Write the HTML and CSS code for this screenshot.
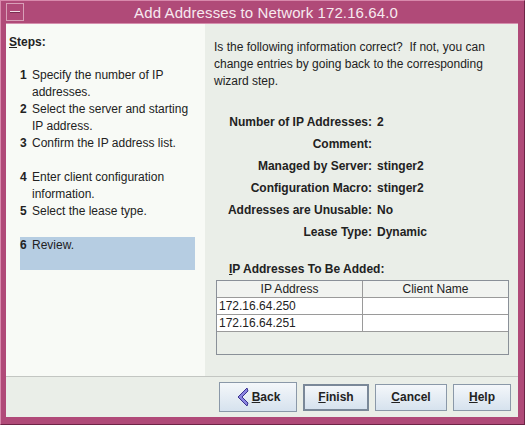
FILE: index.html
```html
<!DOCTYPE html>
<html>
<head>
<meta charset="utf-8">
<link rel="stylesheet" href="styles.css">
</head>
<body>
<div class="window">
  <div class="titlebar">
    <span class="menu-btn"><span class="dash"></span></span>
    <span class="title">Add Addresses to Network 172.16.64.0</span>
  </div>
  <div class="client">
    <div class="main">
      <div class="steps">
        <div class="steps-head"><u>S</u>teps:</div>
        <ol class="step-list">
          <li class="step"><b>1</b><span>Specify the number of IP addresses.</span></li>
          <li class="step"><b>2</b><span>Select the server and starting IP address.</span></li>
          <li class="step gap-after"><b>3</b><span>Confirm the IP address list.</span></li>
          <li class="step"><b>4</b><span>Enter client configuration information.</span></li>
          <li class="step gap-after"><b>5</b><span>Select the lease type.</span></li>
          <li class="step current"><b>6</b><span>Review.</span></li>
        </ol>
      </div>
      <div class="content">
        <p class="intro">Is the following information correct?&nbsp; If not, you can change entries by going back to the corresponding wizard step.</p>
        <div class="summary">
          <div class="lbl">Number of IP Addresses:</div><div class="val">2</div>
          <div class="lbl">Comment:</div><div class="val"></div>
          <div class="lbl">Managed by Server:</div><div class="val">stinger2</div>
          <div class="lbl">Configuration Macro:</div><div class="val">stinger2</div>
          <div class="lbl">Addresses are Unusable:</div><div class="val">No</div>
          <div class="lbl">Lease Type:</div><div class="val">Dynamic</div>
        </div>
        <div class="table-title"><u>I</u>P Addresses To Be Added:</div>
        <div class="table">
          <div class="thead">
            <div class="th">IP Address</div>
            <div class="th">Client Name</div>
          </div>
          <div class="tr"><div class="td">172.16.64.250</div><div class="td"></div></div>
          <div class="tr"><div class="td">172.16.64.251</div><div class="td"></div></div>
        </div>
      </div>
    </div>
    <div class="buttons">
      <button class="btn back"><svg class="chev" width="13" height="20" viewBox="0 0 13 20"><polygon points="11,1 2,10 11,19 12,16 6,10 12,4" fill="#8a84e0" stroke="#3a3290" stroke-width="1"/></svg><span><u>B</u>ack</span></button>
      <button class="btn finish"><u>F</u>inish</button>
      <button class="btn cancel"><u>C</u>ancel</button>
      <button class="btn help"><u>H</u>elp</button>
    </div>
  </div>
</div>
</body>
</html>
```

FILE: styles.css
```css
* { box-sizing: border-box; }
html, body { margin: 0; padding: 0; }
body {
  width: 525px;
  height: 425px;
  overflow: hidden;
  font-family: "Liberation Sans", Arial, sans-serif;
  font-size: 12px;
  color: #222;
}
.window {
  width: 525px;
  height: 425px;
  background: #b04a78;
  padding: 0 6px 7px 5px;
  display: flex;
  flex-direction: column;
  border-top: 1px solid #d889ac;
  border-left: 1px solid #d889ac;
  border-right: 1px solid #6e2446;
  border-bottom: 1px solid #6e2446;
}
.titlebar {
  height: 23px;
  display: flex;
  align-items: center;
  position: relative;
  border-bottom: 1px solid #d58fae;
}
.menu-btn {
  width: 18px;
  height: 18px;
  border: 1px solid #d8a0b8;
  display: flex;
  align-items: center;
  justify-content: center;
}
.dash {
  width: 10px;
  height: 2px;
  background: #f2dde6;
  border-bottom: 1px solid #7a2c50;
}
.title {
  flex: 1;
  text-align: center;
  color: #f7e9ef;
  font-size: 15px;
  letter-spacing: 0.1px;
  padding-right: 10px;
}
.client {
  flex: 1;
  display: flex;
  flex-direction: column;
  background: #eaeee8;
}
.main {
  height: 353px;
  display: flex;
  border-bottom: 1px solid #c3c6c2;
}
.steps {
  width: 199px;
  background: #f8faf6;
  padding: 11px 0 0 3px;
}
.steps-head {
  font-weight: bold;
  font-size: 12px;
  height: 17px;
}
.step-list {
  list-style: none;
  margin: 15px 0 0 0;
  padding: 0;
}
.step {
  display: flex;
  line-height: 17px;
  margin-left: 11px;
  width: 175px;
}
.step b { width: 12px; flex: none; }
.step span { flex: 1; }
.gap-after { margin-bottom: 17px; }
.current {
  background: #b6cde2;
  height: 33px;
}
.content {
  flex: 1;
  padding: 15px 0 0 9px;
}
.intro {
  margin: 0;
  line-height: 17px;
  width: 292px;
}
.summary {
  display: grid;
  grid-template-columns: 158px 1fr;
  column-gap: 5px;
  row-gap: 5px;
  margin-top: 24px;
  font-weight: bold;
  line-height: 17px;
}
.lbl { text-align: right; }
.table-title {
  font-weight: bold;
  margin: 20px 0 0 15px;
  line-height: 17px;
}
.table {
  margin: 2px 0 0 2px;
  width: 293px;
  height: 75px;
  border: 1px solid #8a9098;
  background: #eaeee8;
}
.thead, .tr { display: flex; }
.th, .td {
  flex: none;
  height: 16px;
  line-height: 16px;
}
.th:first-child, .td:first-child { width: 146px; border-right: 1px solid #9a9a9a; }
.th:last-child, .td:last-child { flex: 1; }
.th {
  text-align: center;
  height: 17px;
  border-bottom: 1px solid #9a9a9a;
  background: #f1f3f0;
}
.tr { background: #fff; border-bottom: 1px solid #9a9a9a; }
.td { padding-left: 2px; }
.buttons {
  flex: 1;
  display: flex;
  align-items: center;
  justify-content: flex-end;
  gap: 6px;
  padding-right: 7px;
}
.btn {
  font-family: "Liberation Sans", Arial, sans-serif;
  font-size: 12px;
  font-weight: bold;
  color: #222;
  height: 27px;
  border: 1px solid #8a98a8;
  background: linear-gradient(#f4f7fa, #d6e2ee);
  padding: 0;
  display: flex;
  align-items: center;
  justify-content: center;
}
.back { width: 78px; height: 30px; gap: 3px; }
.finish { width: 66px; border: 2px solid #7a8898; }
.cancel { width: 72px; }
.help { width: 58px; }
.chev { flex: none; }
```
